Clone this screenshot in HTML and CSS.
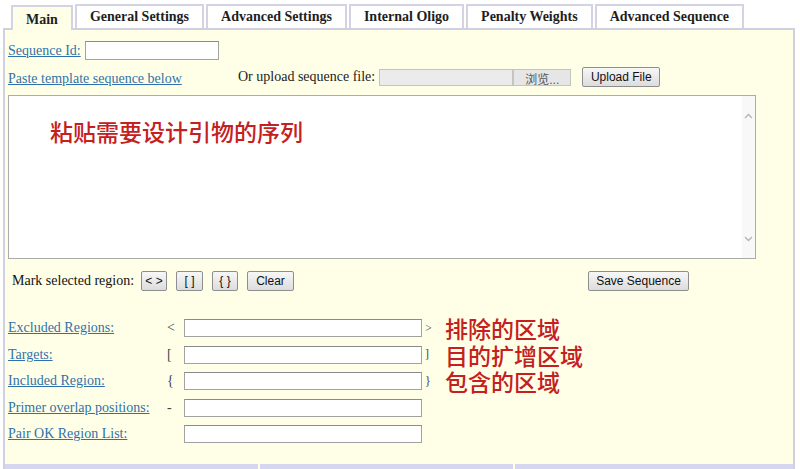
FILE: index.html
```html
<!DOCTYPE html>
<html lang="en">
<head>
    <meta charset="UTF-8">
    <meta name="viewport" content="width=device-width, initial-scale=1.0">
    <title>Primer3 - Main</title>
    <link rel="stylesheet" href="styles.css">
</head>
<body>

    <!-- Tabs -->
    <nav class="tabs">
        <div class="tab active">Main</div>
        <div class="tab">General Settings</div>
        <div class="tab">Advanced Settings</div>
        <div class="tab">Internal Oligo</div>
        <div class="tab">Penalty Weights</div>
        <div class="tab">Advanced Sequence</div>
    </nav>

    <!-- Main Panel -->
    <section class="panel">
        <div class="panel-body">
            <div class="row seq-id">
                <a href="#" class="link">Sequence Id:</a>
                <input type="text" class="text-input id-input">
            </div>

            <div class="row upload-row">
                <a href="#" class="link paste-link">Paste template sequence below</a>
                <span>Or upload sequence file:</span>
                <span class="file-field"></span>
                <button class="btn browse">浏览...</button>
                <button class="btn upload">Upload File</button>
            </div>

            <div class="seq-box">
                <textarea class="seq-text">粘贴需要设计引物的序列</textarea>
                <div class="scroll">
                    <svg width="9" height="6" viewBox="0 0 9 6"><path d="M1 5 L4.5 1.5 L8 5" fill="none" stroke="#b4b4b4" stroke-width="1.3"/></svg>
                    <svg width="9" height="6" viewBox="0 0 9 6"><path d="M1 1 L4.5 4.5 L8 1" fill="none" stroke="#b4b4b4" stroke-width="1.3"/></svg>
                </div>
            </div>

            <div class="row mark-row">
                <span class="mark-label">Mark selected region:</span>
                <div class="mark-buttons">
                    <button class="btn w26">&lt; &gt;</button>
                    <button class="btn w27">[ ]</button>
                    <button class="btn w26">{ }</button>
                    <button class="btn w47">Clear</button>
                </div>
                <button class="btn save">Save Sequence</button>
            </div>

            <div class="regions">
                <a href="#" class="link">Excluded Regions:</a>
                <span class="sym">&lt;</span>
                <input type="text" class="text-input">
                <span class="sym close">&gt;</span>
                <span class="note">排除的区域</span>

                <a href="#" class="link">Targets:</a>
                <span class="sym">[</span>
                <input type="text" class="text-input">
                <span class="sym close">]</span>
                <span class="note">目的扩增区域</span>

                <a href="#" class="link">Included Region:</a>
                <span class="sym">{</span>
                <input type="text" class="text-input">
                <span class="sym close">}</span>
                <span class="note">包含的区域</span>

                <a href="#" class="link">Primer overlap positions:</a>
                <span class="sym">-</span>
                <input type="text" class="text-input">
                <span></span>
                <span></span>

                <a href="#" class="link">Pair OK Region List:</a>
                <span class="sym"></span>
                <input type="text" class="text-input">
                <span></span>
                <span></span>
            </div>
        </div>

        <!-- Next section header -->
        <div class="sub-bar">
            <div class="sub-cell"></div>
            <div class="sub-cell"></div>
            <div class="sub-cell last"></div>
        </div>
    </section>

</body>
</html>
```

FILE: styles.css
```css
/* General Styles */
body {
    margin: 0;
    padding: 0;
    background-color: #fff;
    font-family: "Liberation Serif", "Times New Roman", serif;
    font-size: 14px;
    color: #222;
}

/* Tabs */
.tabs {
    display: flex;
    align-items: flex-end;
    gap: 2px;
    margin: 4px 0 0 11px;
    height: 24px;
}

.tab {
    box-sizing: border-box;
    height: 24px;
    line-height: 22px;
    padding: 0 13px;
    border: 2px solid #d3d3e3;
    border-bottom: none;
    background-color: #fff;
    font-weight: bold;
    color: #1e1e1e;
    white-space: nowrap;
}

.tab.active {
    height: 25px;
    line-height: 25px;
    margin-bottom: -2px;
    background-color: #ffffe8;
    position: relative;
    z-index: 1;
}

/* Panel */
.panel {
    margin: 0 5px 0 3px;
    border: 2px solid #d0d0e0;
    border-bottom: none;
    background-color: #ffffe8;
}

.panel-body {
    padding: 11px 0 0 3px;
}

.row {
    display: flex;
    align-items: center;
}

.link {
    color: #2f72ab;
    text-decoration: underline;
}

.text-input {
    box-sizing: border-box;
    height: 18px;
    margin: 0;
    border: 1px solid #a2a2a2;
    border-top-color: #8a8a8a;
    background-color: #fff;
}

/* Sequence Id */
.seq-id {
    height: 19px;
}

.id-input {
    width: 134px;
    height: 19px;
    margin-left: 4px;
}

/* Upload row */
.upload-row {
    height: 20px;
    margin-top: 7px;
}

.paste-link {
    width: 230px;
    padding-top: 3px;
}

.file-field {
    box-sizing: border-box;
    width: 134px;
    height: 17px;
    margin-left: 4px;
    background-color: #ebebeb;
    border: 1px solid #c4c4c4;
}

/* Buttons */
.btn {
    box-sizing: border-box;
    height: 20px;
    margin: 0;
    padding: 0;
    font-family: "Liberation Sans", Arial, sans-serif;
    font-size: 12px;
    color: #111;
    background: linear-gradient(#f7f7f7, #dcdcdc);
    border: 1px solid #8e8e8e;
    border-radius: 2px;
}

.browse {
    width: 58px;
    height: 17px;
    font-family: "Liberation Sans", "Noto Sans CJK SC", sans-serif;
    color: #555;
    border-color: #c4c4c4;
    background: #e6e6e6;
    border-radius: 0;
}

.upload {
    width: 78px;
    margin-left: 11px;
}

/* Sequence box */
.seq-box {
    box-sizing: border-box;
    display: flex;
    width: 748px;
    height: 164px;
    margin-top: 8px;
    border: 1px solid #ababab;
    background-color: #fff;
}

.seq-text {
    flex: 1;
    margin: 0;
    padding: 21px 0 0 41px;
    border: none;
    outline: none;
    resize: none;
    background: transparent;
    font-family: "Noto Sans CJK SC", sans-serif;
    font-size: 23px;
    font-weight: 500;
    line-height: 28px;
    color: #c42020;
}

.scroll {
    width: 13px;
    display: flex;
    flex-direction: column;
    justify-content: space-between;
    align-items: center;
    padding: 17px 0 16px;
    background-color: #f8f8f8;
}

/* Mark row */
.mark-row {
    width: 681px;
    height: 20px;
    margin-top: 12px;
}

.mark-label {
    width: 129px;
    padding-left: 4px;
    color: #111;
    white-space: nowrap;
}

.mark-buttons {
    display: flex;
    gap: 9px;
}

.w26 { width: 26px; }
.w27 { width: 27px; }
.w47 { width: 47px; }

.save {
    width: 101px;
    margin-left: auto;
}

/* Region list */
.regions {
    display: grid;
    grid-template-columns: 160px 16px 238px 23px auto;
    grid-auto-rows: 18px;
    row-gap: 8.5px;
    align-items: center;
    margin-top: 28px;
}

.sym {
    color: #444;
    margin-left: -1px;
}

.sym.close {
    padding-left: 4px;
    font-size: 12px;
}

.note {
    font-family: "Noto Sans CJK SC", sans-serif;
    font-size: 23px;
    font-weight: 500;
    line-height: 18px;
    color: #c42020;
    white-space: nowrap;
}

/* Sub bar */
.sub-bar {
    display: flex;
    gap: 2px;
    margin-top: 21px;
    height: 20px;
}

.sub-cell {
    width: 253px;
    background-color: #d6d6f0;
}

.sub-cell.last {
    flex: 1;
}
```
